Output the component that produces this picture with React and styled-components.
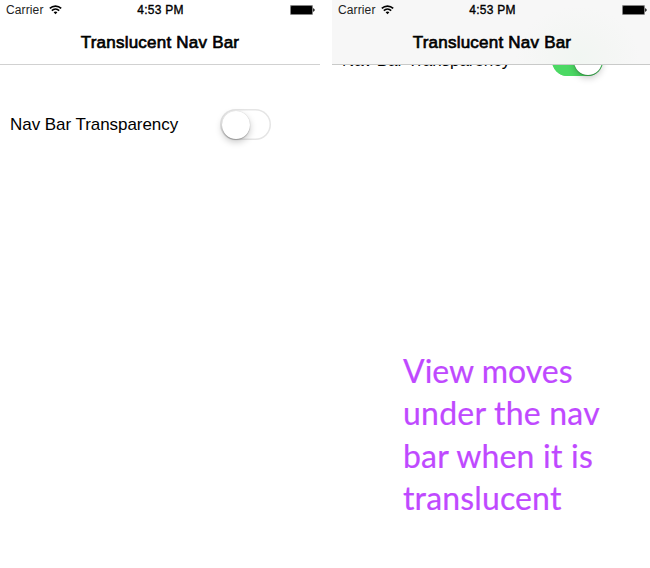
import React from 'react';
import styled, { createGlobalStyle } from 'styled-components';

const GlobalStyle = createGlobalStyle`
  * { box-sizing: border-box; }
  body { margin: 0; background: #fff; overflow: hidden; }
`;

const Stage = styled.main`
  display: flex;
  gap: 12px;
  width: 650px;
  height: 568px;
  overflow: hidden;
  background: #fff;
  color: #000;
  font-family: "Liberation Sans", Arial, sans-serif;
`;

const Phone = styled.section`
  position: relative;
  flex: 0 0 320px;
  height: 568px;
  padding-top: ${(p) => (p.$underBar ? 0 : 64)}px;
`;

const Header = styled.header`
  position: absolute;
  inset: 0 0 auto 0;
  z-index: 1;
  height: 65px;
  border-bottom: 1px solid ${(p) => (p.$translucent ? '#c9cac9' : '#d1d1d1')};
  background: ${(p) =>
    p.$translucent
      ? 'radial-gradient(ellipse 62px 52px at 246px 58px, #f1f6f2 0%, #f4f6f4 45%, #f7f7f7 100%)'
      : '#fff'};
`;

const StatusBar = styled.div`
  display: grid;
  grid-template-columns: 1fr auto 1fr;
  align-items: center;
  height: 20px;
  padding: 0 5px 0 6px;
`;

const CarrierGroup = styled.div`
  display: flex;
  align-items: center;
  gap: 5px;
`;

const Carrier = styled.span`
  font-size: 12px;
  line-height: 14px;
  letter-spacing: 0.12px;
  color: #222;
`;

const Clock = styled.span`
  font-size: 12px;
  line-height: 14px;
  letter-spacing: 0.25px;
  -webkit-text-stroke: 0.35px #000;
`;

const BatterySlot = styled.div`
  display: flex;
  justify-content: flex-end;
`;

const Title = styled.h1`
  margin: 0;
  padding-top: 1px;
  height: 44px;
  line-height: 44px;
  text-align: center;
  font-size: 17px;
  font-weight: 400;
  letter-spacing: 0.22px;
  -webkit-text-stroke: 0.65px #000;
`;

const Content = styled.div`
  display: flow-root;
`;

const SettingRow = styled.div`
  display: flex;
  align-items: center;
  justify-content: space-between;
  height: 31px;
  margin: 45px 49px 0 10px;
`;

const Label = styled.span`
  font-size: 17px;
  line-height: 20px;
  letter-spacing: -0.05px;
`;

const Switch = styled.div`
  display: flex;
  justify-content: ${(p) => (p.$on ? 'flex-end' : 'flex-start')};
  width: 51px;
  height: 31px;
  padding: 1.5px;
  border-radius: 16px;
  background: ${(p) => (p.$on ? '#4cd964' : '#fff')};
  box-shadow: inset 0 0 0 1.5px ${(p) => (p.$on ? '#4cd964' : '#e5e5e5')};
`;

const Knob = styled.span`
  width: 28px;
  height: 28px;
  border-radius: 50%;
  background: #fff;
  box-shadow: 0 0 1px rgba(0, 0, 0, 0.2), 0 1px 1px rgba(0, 0, 0, 0.2),
    0 3px 7px rgba(0, 0, 0, 0.22);
`;

const Note = styled.p`
  position: absolute;
  left: 71px;
  top: 349.6px;
  margin: 0;
  color: #bf49ff;
  font-family: Lato, "Open Sans", sans-serif;
  font-size: 32px;
  line-height: 42.5px;
  white-space: nowrap;
  -webkit-text-stroke: 0.2px #bf49ff;
`;

const NoteLine = styled.span`
  display: block;
  letter-spacing: ${(p) => p.$tracking}px;
`;

const noteLines = [
  ['View moves', 0],
  ['under the nav', 0.22],
  ['bar when it is', 0.2],
  ['translucent', 0.15],
];

const WifiIcon = () => (
  <svg width="13" height="10" viewBox="0 0 13 10" fill="none" stroke="#000">
    <path d="M0.8 3.4C4 .3 9 .3 12.2 3.4" strokeWidth="1.6" />
    <path d="M2.8 5.6C4.9 3.6 8.1 3.6 10.2 5.6" strokeWidth="1.5" />
    <path d="M6.5 9.2L4.6 7.3C5.7 6.3 7.3 6.3 8.4 7.3Z" fill="#000" stroke="none" />
  </svg>
);

const BatteryIcon = () => (
  <svg width="25" height="10" viewBox="0 0 25 10">
    <rect width="23" height="10" rx="1.2" fill="#858585" />
    <rect x="1" y="1" width="21" height="8" rx="0.4" fill="#000" />
    <path d="M23.2 3.2C25.1 3.7 25.1 6.3 23.2 6.8Z" fill="#000" />
  </svg>
);

function PhoneScreen({ translucent, children }) {
  return (
    <Phone $underBar={translucent}>
      <Header $translucent={translucent}>
        <StatusBar>
          <CarrierGroup>
            <Carrier>Carrier</Carrier>
            <WifiIcon />
          </CarrierGroup>
          <Clock>4:53 PM</Clock>
          <BatterySlot>
            <BatteryIcon />
          </BatterySlot>
        </StatusBar>
        <Title>Translucent Nav Bar</Title>
      </Header>
      <Content>
        <SettingRow>
          <Label>Nav Bar Transparency</Label>
          <Switch $on={translucent}>
            <Knob />
          </Switch>
        </SettingRow>
      </Content>
      {children}
    </Phone>
  );
}

export default function App() {
  return (
    <>
      <GlobalStyle />
      <Stage>
        <PhoneScreen translucent={false} />
        <PhoneScreen translucent>
          <Note>
            {noteLines.map(([text, tracking]) => (
              <NoteLine key={text} $tracking={tracking}>
                {text}
              </NoteLine>
            ))}
          </Note>
        </PhoneScreen>
      </Stage>
    </>
  );
}
